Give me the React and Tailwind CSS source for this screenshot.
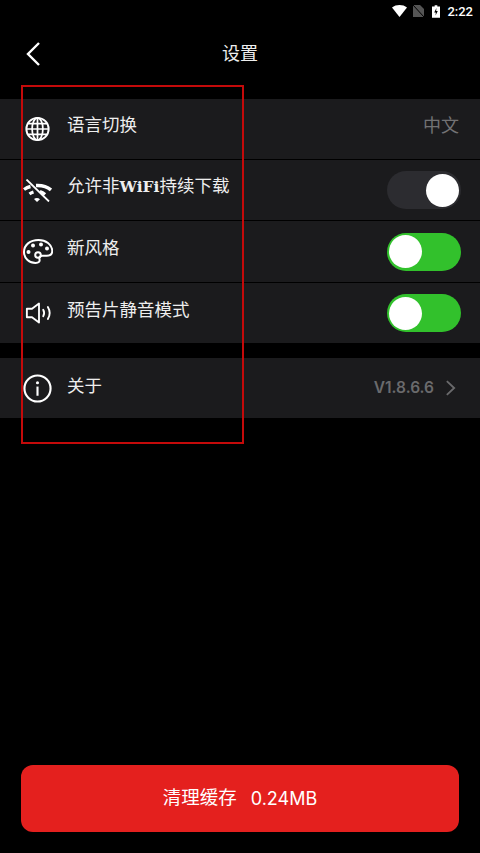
const cjk = "font-['Noto_Sans_CJK_SC','Noto_Sans',sans-serif]";

const GlobeIcon = () => (
  <svg className="ml-[2px]" width="25" height="26" viewBox="0 0 26 26" fill="none" stroke="#fff" strokeWidth="1.800">
    <circle cx="13" cy="13" r="11.600" strokeWidth="2" />
    <ellipse cx="13" cy="13" rx="5.600" ry="11.600" />
    <path d="M13 1.500v23M1.500 13h23M3.200 7.400h19.600M3.200 18.600h19.600" />
  </svg>
);

const WifiOffIcon = () => (
  <svg width="29" height="23" viewBox="0 0 29 23" fill="none" stroke="#fff">
    <path d="M1 10.500C3 9 5 8 7.500 7.500M13 6.500c5.500-.3 11 1 15 4.500" strokeWidth="3.400" />
    <path d="M6.500 15c1.300-1 2.500-1.500 4-2M17 12.500c2 .5 3.500 1.500 5 3" strokeWidth="3.200" />
    <path d="M11 20c1.800-1.300 4.200-1.300 6 .2l-3 2.800z" fill="#fff" stroke="none" />
    <path d="M3.500.5 26 22.500" strokeWidth="1.800" />
  </svg>
);

const PaletteIcon = () => (
  <svg width="30" height="25" viewBox="0 0 30 25" fill="none" stroke="#fff" strokeWidth="2">
    <path d="M15.500 1C7 1 1 6 1 13c0 6.500 5.500 11 11.500 11 3.500 0 4.500-1.800 4-3.600-.5-1.900.3-3.600 2.800-3.600h4.500c3.400 0 5.500-2 5.500-5C28.800 5.500 23 1 15.500 1z" />
    <circle cx="15" cy="16" r="2.800" />
    <circle cx="5.500" cy="13" r="2" fill="#fff" stroke="none" />
    <circle cx="10" cy="6.500" r="2" fill="#fff" stroke="none" />
    <circle cx="18" cy="5.500" r="2" fill="#fff" stroke="none" />
    <circle cx="24" cy="9.500" r="2" fill="#fff" stroke="none" />
  </svg>
);

const SpeakerIcon = () => (
  <svg className="ml-[2px]" width="28" height="24" viewBox="0 0 30 24" fill="none" stroke="#fff" strokeWidth="2">
    <path d="M2 7.500h5.500L15 1.800v20.400L7.500 16.500H2z" strokeLinejoin="round" />
    <path d="M19.500 8.500c1.300 2.200 1.300 4.800 0 7" strokeLinecap="round" />
    <path d="M24.500 5.500c2.400 4 2.400 9 0 13" strokeLinecap="round" />
  </svg>
);

const InfoIcon = () => (
  <svg width="29" height="29" viewBox="0 0 30 30" fill="none" stroke="#fff">
    <circle cx="15" cy="15" r="13.500" strokeWidth="2.200" />
    <circle cx="15" cy="9" r="1.600" fill="#fff" stroke="none" />
    <path d="M15 13v9.500" strokeWidth="2.200" />
  </svg>
);

const Toggle = ({ on }) => (
  <div
    className={
      on
        ? "flex h-[38px] w-[74px] items-center justify-start rounded-full bg-[#32c12c] px-[2px]"
        : "flex h-[38px] w-[74px] items-center justify-end rounded-full bg-[#2c2c30] px-[2px]"
    }
  >
    <div className="h-[33px] w-[33px] rounded-full bg-white" />
  </div>
);

const Row = ({ icon, label, right, className, labelClass }) => (
  <div className={`flex items-center bg-[#1b1b1d] pl-[23px] pr-[19px] ${className}`}>
    <div className="flex w-[44px] items-center">{icon}</div>
    <div className={`flex-1 text-[17.500px] leading-[26px] text-[#eeeeee] ${cjk} ${labelClass}`}>{label}</div>
    {right}
  </div>
);

export default function App() {
  return (
    <div className="relative flex h-[853px] w-[480px] flex-col overflow-hidden bg-black">
      <div className="flex h-[21px] items-center justify-end pr-[7px] pt-[1px]">
        <svg width="15" height="12" viewBox="0 0 15 12">
          <path d="M0 2.500C4 -0.800 11 -0.800 15 2.500L7.500 12z" fill="#fff" />
        </svg>
        <svg className="ml-[6px]" width="11" height="12" viewBox="0 0 11 12">
          <path d="M0 0h7l4 4v8H0z" fill="#555" />
          <path d="M0 0 11 12" stroke="#000" strokeWidth="1" />
        </svg>
        <svg className="ml-[8px]" width="8" height="13" viewBox="0 0 9 14">
          <path d="M3 0h3v1.500h3V14H0V1.500h3z" fill="#fff" />
          <path d="M5 3 2.500 8h1.800L4 11.500 6.500 6.500H4.700z" fill="#000" />
        </svg>
        <span className="ml-[7px] font-['Roboto',sans-serif] text-[13px] leading-none font-medium text-white">2:22</span>
      </div>

      <div className="relative flex h-[64px] items-center justify-center">
        <svg className="absolute left-[25px] top-[20px]" width="16" height="26" viewBox="0 0 16 26" fill="none" stroke="#fff" strokeWidth="2.400">
          <path d="M14 2 3 13l11 11" />
        </svg>
        <span className={`pb-[2px] text-[18px] text-[#eeeeee] ${cjk}`}>设置</span>
      </div>

      <div className="mt-[14px] flex flex-col">
        <Row
          className="h-[61px] border-b border-black"
          labelClass="pb-[10px]"
          icon={<GlobeIcon />}
          label="语言切换"
          right={<span className={`pb-[9px] pr-[2px] text-[18px] text-[#727274] ${cjk}`}>中文</span>}
        />
        <Row
          className="h-[61px] border-b border-black"
          labelClass="pb-[8px]"
          icon={<WifiOffIcon />}
          label={
            <>
              允许非<span className="font-['DejaVu_Serif',serif] text-[15.500px] font-bold">WiFi</span>持续下载
            </>
          }
          right={<Toggle />}
        />
        <Row
          className="h-[62px] border-b border-black"
          labelClass="pb-[9px]"
          icon={<PaletteIcon />}
          label="新风格"
          right={<Toggle on />}
        />
        <Row className="h-[60px]" labelClass="pb-[9px]" icon={<SpeakerIcon />} label="预告片静音模式" right={<Toggle on />} />
      </div>

      <div className="mt-[15px] flex h-[60px] items-center bg-[#1b1b1d] pl-[23px] pr-[24px]">
        <div className="flex w-[44px] items-center">
          <InfoIcon />
        </div>
        <div className={`flex-1 pb-[6px] text-[17.500px] leading-[26px] text-[#eeeeee] ${cjk}`}>关于</div>
        <span className="mr-[11px] font-['Inter',sans-serif] text-[15.500px] font-semibold text-[#6a6a6c]">V1.8.6.6</span>
        <svg width="11" height="18" viewBox="0 0 12 18" fill="none" stroke="#6a6a6c" strokeWidth="2">
          <path d="M2 1.500 10 9l-8 7.500" />
        </svg>
      </div>

      <div className="mt-auto mb-[21px] ml-[21px] flex h-[67px] w-[438px] items-center justify-center gap-[14px] rounded-[12px] bg-[#e4201e] text-white">
        <span className={`pb-[4px] text-[18.500px] ${cjk}`}>清理缓存</span>
        <span className="font-['Inter',sans-serif] text-[18px]">0.24MB</span>
      </div>

      {/* red annotation box over the rows */}
      <div className="absolute left-[21px] top-[85px] h-[359px] w-[223px] border-2 border-[#c40a0a]" />
    </div>
  );
}
